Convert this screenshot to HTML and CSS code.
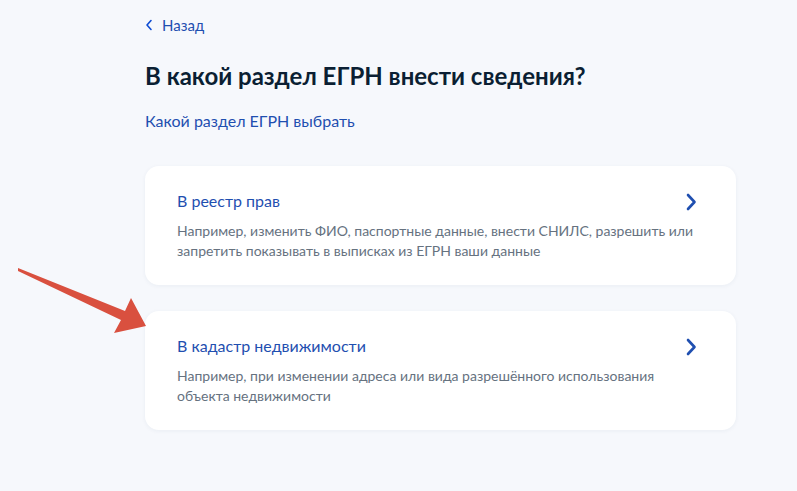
FILE: index.html
```html
<!DOCTYPE html>
<html lang="ru">
<head>
<meta charset="utf-8">
<title>ЕГРН</title>
<link rel="stylesheet" href="styles.css">
</head>
<body>
<svg class="arrow" width="160" height="345" viewBox="0 0 160 345">
  <polygon points="18,268 125,311 131,298 146,326 114,333 121,320 18,271" fill="#d9503f"/>
</svg>
<main class="page">
  <a class="back" href="#">
    <svg class="back-icon" width="8" height="12" viewBox="0 0 8 12"><path d="M6 1.5 L2 6 L6 10.5" fill="none" stroke="#0d4cd3" stroke-width="1.6" stroke-linecap="round" stroke-linejoin="round"/></svg>
    <span>Назад</span>
  </a>
  <h1 class="title">В какой раздел ЕГРН внести сведения?</h1>
  <a class="help" href="#">Какой раздел ЕГРН выбрать</a>
  <div class="cards">
    <a class="card" href="#">
      <div class="card-head">
        <div class="card-title">В реестр прав</div>
        <svg class="chev" width="12" height="18" viewBox="0 0 12 18"><path d="M3 2 L9.5 9 L3 16" fill="none" stroke="#1f4fb0" stroke-width="2.6" stroke-linecap="round" stroke-linejoin="round"/></svg>
      </div>
      <div class="card-text">Например, изменить ФИО, паспортные данные, внести СНИЛС, разрешить или запретить показывать в выписках из ЕГРН ваши данные</div>
    </a>
    <a class="card" href="#">
      <div class="card-head">
        <div class="card-title">В кадастр недвижимости</div>
        <svg class="chev" width="12" height="18" viewBox="0 0 12 18"><path d="M3 2 L9.5 9 L3 16" fill="none" stroke="#1f4fb0" stroke-width="2.6" stroke-linecap="round" stroke-linejoin="round"/></svg>
      </div>
      <div class="card-text">Например, при изменении адреса или вида разрешённого использования объекта недвижимости</div>
    </a>
  </div>
</main>
</body>
</html>
```
FILE: styles.css
```css
html, body {
  margin: 0;
  padding: 0;
}
body {
  background: #f6f8fc;
  font-family: Lato, "Noto Sans", sans-serif;
  color: #0b1f33;
  width: 797px;
  height: 491px;
  overflow: hidden;
  position: relative;
}
.arrow {
  position: absolute;
  left: 0;
  top: 0;
  z-index: 2;
}
.page {
  padding: 14px 0 0 145px;
  width: 591px;
  display: flex;
  flex-direction: column;
  align-items: flex-start;
}
.back {
  display: flex;
  align-items: center;
  gap: 9px;
  color: #1f4fb0;
  text-decoration: none;
  font-size: 15px;
  line-height: 22px;
}
.back-icon {
  display: block;
}
.title {
  margin: 24px 0 0;
  font-size: 24px;
  line-height: 32px;
  font-weight: 700;
  color: #0b1f33;
}
.help {
  margin-top: 17px;
  font-size: 16px;
  line-height: 24px;
  color: #1f4fb0;
  text-decoration: none;
}
.cards {
  margin-top: 33px;
  display: flex;
  flex-direction: column;
  gap: 26px;
  width: 591px;
}
.card {
  display: flex;
  flex-direction: column;
  gap: 9px;
  background: #ffffff;
  border-radius: 14px;
  box-shadow: 0 1px 4px rgba(40, 60, 100, 0.06);
  padding: 24px 32px 25px 32px;
  text-decoration: none;
  height: 70px;
}
.card-head {
  display: flex;
  align-items: flex-start;
  justify-content: space-between;
  padding-right: 7px;
}
.card-title {
  font-size: 16px;
  line-height: 22px;
  color: #1f4fb0;
}
.card-text {
  font-size: 14px;
  line-height: 20px;
  color: #66727f;
}
.chev {
  display: block;
  flex: 0 0 auto;
  margin-top: 3px;
  margin-bottom: -3px;
}
```
